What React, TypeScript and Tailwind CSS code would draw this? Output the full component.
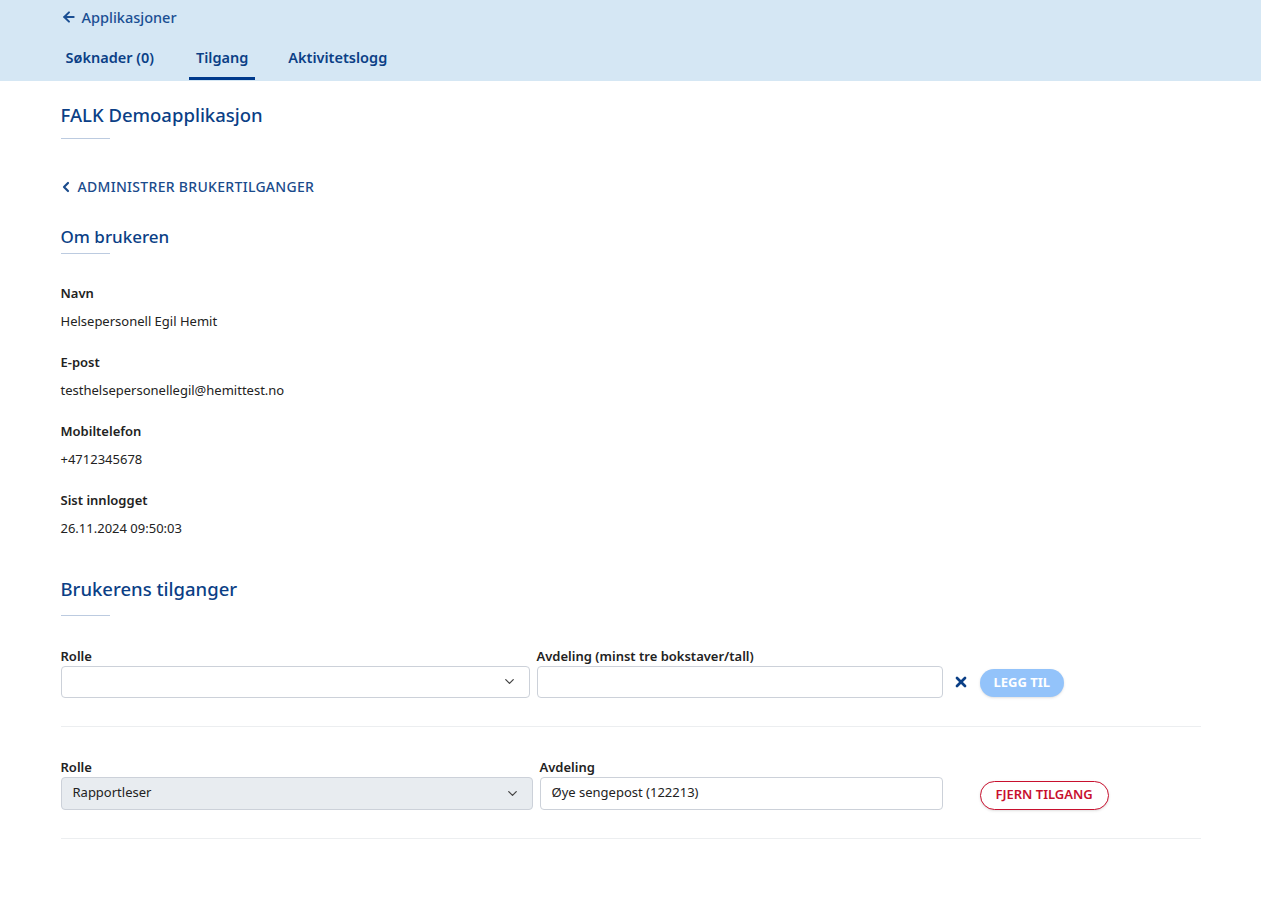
import { ArrowLeft, ChevronLeft, ChevronDown, X } from "lucide-react";

const font = { fontFamily: '"Noto Sans", "Open Sans", sans-serif' };

function Heading({ children, className }: { children: React.ReactNode; className?: string }) {
  return (
    <div className={className}>
      <h2 className="text-[#0b3f86] font-medium leading-tight">{children}</h2>
      <div className="w-[49px] h-px bg-[#bccbe0]" />
    </div>
  );
}

function Field({ label, value }: { label: string; value: string }) {
  return (
    <div className="mb-[21px]">
      <div className="text-[13px] font-semibold text-[#222] leading-5">{label}</div>
      <div className="text-[13px] text-[#222] leading-5 mt-2">{value}</div>
    </div>
  );
}

export default function App() {
  return (
    <div className="min-h-screen bg-white" style={font}>
      <header className="bg-[#d5e7f4] h-[81px]">
        <div className="w-[1140px] mx-auto">
          <a className="flex items-center gap-[5px] pt-[7px] text-[#1a4f93] text-[14.5px] font-medium leading-5">
            <ArrowLeft size={16} strokeWidth={3} />
            Applikasjoner
          </a>
          <nav className="flex mt-[20px] text-[14.5px] font-semibold text-[#0b3f86]">
            <span className="px-[5px] pb-[10px] leading-5">Søknader (0)</span>
            <span className="ml-[30px] px-[7px] pb-[10px] leading-5 border-b-[3px] border-[#003a8c]">Tilgang</span>
            <span className="ml-[26px] px-[7px] pb-[10px] leading-5">Aktivitetslogg</span>
          </nav>
        </div>
      </header>

      <main className="w-[1140px] mx-auto">
        <Heading className="mt-[22px] text-[18.5px] [&>div]:mt-[12px]">FALK Demoapplikasjon</Heading>

        <a className="flex items-center gap-[4px] mt-[38px] text-[14px] font-medium tracking-[0.3px] text-[#1a4b8c] leading-5">
          <ChevronLeft size={16} strokeWidth={3.2} className="-ml-[3px]" />
          ADMINISTRER BRUKERTILGANGER
        </a>

        <Heading className="mt-[29px] text-[17px] [&>div]:mt-[6px]">Om brukeren</Heading>

        <div className="mt-[29px]">
          <Field label="Navn" value="Helsepersonell Egil Hemit" />
          <Field label="E-post" value="testhelsepersonellegil@hemittest.no" />
          <Field label="Mobiltelefon" value="+4712345678" />
          <Field label="Sist innlogget" value="26.11.2024 09:50:03" />
        </div>

        <Heading className="mt-[39px] text-[18.5px] [&>div]:mt-[14px]">Brukerens tilganger</Heading>

        <div className="mt-[30px] pb-[28px] border-b border-[#eceef0]">
          <div className="flex items-end">
            <div className="w-[469px]">
              <div className="text-[13px] font-semibold text-[#222] leading-5">Rolle</div>
              <div className="h-[32px] border border-[#ccd1d9] rounded-[4px] bg-white flex items-center justify-end pr-[12px]">
                <ChevronDown size={15} className="text-[#444]" />
              </div>
            </div>
            <div className="w-[406px] ml-[7px]">
              <div className="text-[13px] font-semibold text-[#222] leading-5">Avdeling (minst tre bokstaver/tall)</div>
              <div className="h-[32px] border border-[#ccd1d9] rounded-[4px] bg-white" />
            </div>
            <div className="h-[32px] flex items-center ml-[10px]">
              <X size={16} strokeWidth={4} className="text-[#0b3f86]" />
            </div>
            <button className="ml-[11px] mb-[1px] h-[28px] px-[14px] rounded-full bg-[#93c3fa] text-white text-[13px] font-bold shadow-sm">
              LEGG TIL
            </button>
          </div>
        </div>

        <div className="pt-[30px] pb-[28px] border-b border-[#eceef0]">
          <div className="flex items-end">
            <div className="w-[472px]">
              <div className="text-[13px] font-semibold text-[#222] leading-5">Rolle</div>
              <div className="h-[33px] border border-[#ccd1d9] rounded-[4px] bg-[#e8ecf0] flex items-center justify-between pl-[11px] pr-[12px] text-[13px] text-[#222]">
                Rapportleser
                <ChevronDown size={15} className="text-[#444]" />
              </div>
            </div>
            <div className="w-[403px] ml-[7px]">
              <div className="text-[13px] font-semibold text-[#222] leading-5">Avdeling</div>
              <div className="h-[33px] border border-[#ccd1d9] rounded-[4px] bg-white flex items-center pl-[11px] text-[13px] text-[#222]">
                Øye sengepost (122213)
              </div>
            </div>
            <button className="ml-[37px] mb-[0px] h-[29px] px-[15px] rounded-full border border-[#c8102e] bg-white text-[#c8102e] text-[13px] font-semibold shadow-sm">
              FJERN TILGANG
            </button>
          </div>
        </div>
      </main>
    </div>
  );
}
